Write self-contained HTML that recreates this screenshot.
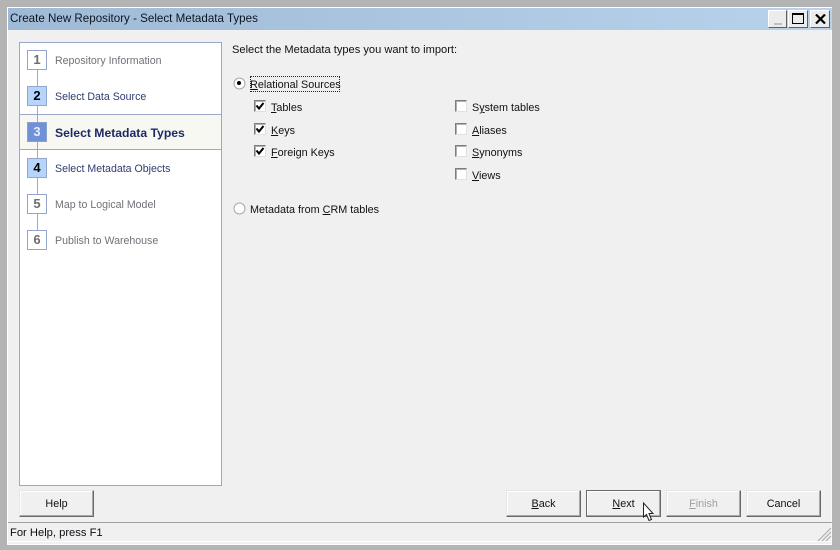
<!DOCTYPE html>
<html><head><meta charset="utf-8"><style>
html,body{margin:0;padding:0}
body{width:840px;height:550px;overflow:hidden;position:relative;background:#b4b4b4;font-family:"Liberation Sans",sans-serif;font-size:11px;color:#111}
div,span.a{position:absolute;box-sizing:border-box}
.t{white-space:nowrap;line-height:14px;height:14px}
u{text-decoration:underline;text-underline-offset:1px}
.n{width:20px;height:20px;left:27px;border:1px solid #93a5c8;background:#fff;color:#6d6d6d;font-weight:bold;font-size:13px;line-height:18px;text-align:center}
.n.b{background:#b5d5fd;color:#000}
.n.c{background:#7091d8;color:#e8eefb;border-color:#8aa0cf}
.s{left:55px;color:#6f7278;font-size:10.6px}
.s.d{color:#2f3c72}
.cb{width:12px;height:12px;background:#fff;border:1px solid;border-color:#7d7d7d #e0e0e0 #e0e0e0 #7d7d7d;box-shadow:inset 1px 1px 0 #b0b0b0}
.btn{height:27px;width:75px;top:490px;background:#f0f0f0;border:1px solid;border-color:#e6e6e6 #6a6a6a #6a6a6a #e6e6e6;box-shadow:inset -1px -1px 0 #a8a8a8,inset 1px 1px 0 #fff;text-align:center;line-height:27px;font-size:10.8px}
.wb{top:10px;height:18px;background:#ececec;border:1px solid;border-color:#fff #606060 #606060 #fff}
</style></head><body>
<div style="left:7px;top:7px;width:825px;height:538px;background:#f0f0f0;border-top:1px solid #fff;border-left:1px solid #fff;border-right:1px solid #fafafa;border-bottom:1px solid #fff"></div>
<div style="left:8px;top:8px;width:824px;height:22px;background:linear-gradient(90deg,#9fbad6,#b9d2ec)"></div>
<div class="t" style="left:10px;top:12px;font-size:11.6px;color:#0c1622">Create New Repository - Select Metadata Types</div>

<div class="wb" style="left:768px;width:19px"><div style="left:5px;top:12px;width:8px;height:2px;background:#c0c0c0"></div></div>
<div class="wb" style="left:788px;width:20px"><div style="left:3px;top:2px;width:12px;height:11px;border:1px solid #000;border-top-width:2px"></div></div>
<div class="wb" style="left:810px;width:20px"><svg style="position:absolute;left:4px;top:3px" width="11" height="10" viewBox="0 0 11 10"><path d="M1 .5L10 9.5M10 .5L1 9.5" stroke="#000" stroke-width="2.2" fill="none"/></svg></div>

<div style="left:19px;top:42px;width:203px;height:444px;background:#fff;border:1px solid #9aa8ca"></div>
<div style="left:20px;top:114px;width:201px;height:36px;background:#f8f8f3;border-top:1px solid #9aa8ca;border-bottom:1px solid #9aa8ca"></div>
<div style="left:37px;top:60px;width:1px;height:180px;background:#9aa8ca"></div>

<div class="n" style="top:50px">1</div><div class="t s" style="top:54px">Repository Information</div>
<div class="n b" style="top:86px">2</div><div class="t s d" style="top:90px">Select Data Source</div>
<div class="n c" style="top:122px">3</div><div class="t" style="left:55px;top:126px;font-weight:bold;color:#1e2a63;font-size:12.2px">Select Metadata Types</div>
<div class="n b" style="top:158px">4</div><div class="t s d" style="top:162px">Select Metadata Objects</div>
<div class="n" style="top:194px">5</div><div class="t s" style="top:198px">Map to Logical Model</div>
<div class="n" style="top:230px">6</div><div class="t s" style="top:234px">Publish to Warehouse</div>

<div class="t" style="left:232px;top:43px;font-size:11.1px">Select the Metadata types you want to import:</div>

<svg style="position:absolute;left:233px;top:77px" width="13" height="13"><circle cx="6.5" cy="6.5" r="5.5" fill="#fff" stroke="#a8a8a8"/><circle cx="6" cy="6" r="2" fill="#000"/></svg>
<div class="t" style="left:250px;top:78px;font-size:10.8px"><u>R</u>elational Sources</div>
<div style="left:250px;top:76px;width:90px;height:16px;border:1px dotted #222"></div>

<div class="cb" style="left:254px;top:100px"></div><svg style="position:absolute;left:254px;top:100px" width="12" height="12"><path d="M2.5 5.5L5 8.5L9.5 3" stroke="#000" stroke-width="2" fill="none"/></svg>
<div class="t" style="left:271px;top:101px;font-size:10.8px"><u>T</u>ables</div>
<div class="cb" style="left:254px;top:123px"></div><svg style="position:absolute;left:254px;top:123px" width="12" height="12"><path d="M2.5 5.5L5 8.5L9.5 3" stroke="#000" stroke-width="2" fill="none"/></svg>
<div class="t" style="left:271px;top:124px;font-size:10.8px"><u>K</u>eys</div>
<div class="cb" style="left:254px;top:145px"></div><svg style="position:absolute;left:254px;top:145px" width="12" height="12"><path d="M2.5 5.5L5 8.5L9.5 3" stroke="#000" stroke-width="2" fill="none"/></svg>
<div class="t" style="left:271px;top:146px;font-size:10.8px"><u>F</u>oreign Keys</div>

<div class="cb" style="left:455px;top:100px"></div><div class="t" style="left:472px;top:101px;font-size:10.8px">S<u>y</u>stem tables</div>
<div class="cb" style="left:455px;top:123px"></div><div class="t" style="left:472px;top:124px;font-size:10.8px"><u>A</u>liases</div>
<div class="cb" style="left:455px;top:145px"></div><div class="t" style="left:472px;top:146px;font-size:10.8px"><u>S</u>ynonyms</div>
<div class="cb" style="left:455px;top:168px"></div><div class="t" style="left:472px;top:169px;font-size:10.8px"><u>V</u>iews</div>

<svg style="position:absolute;left:233px;top:202px" width="13" height="13"><circle cx="6.5" cy="6.5" r="5.5" fill="#fff" stroke="#a8a8a8"/></svg>
<div class="t" style="left:250px;top:203px;font-size:10.8px">Metadata from <u>C</u>RM tables</div>

<div class="btn" style="left:19px">Help</div>
<div class="btn" style="left:506px"><u>B</u>ack</div>
<div class="btn" style="left:586px;border-color:#6a6a6a;box-shadow:inset -1px -1px 0 #a8a8a8,inset 1px 1px 0 #fff"><u>N</u>ext</div>
<div class="btn" style="left:666px;color:#a0a0a0"><u>F</u>inish</div>
<div class="btn" style="left:746px">Cancel</div>

<svg style="position:absolute;left:642px;top:502px" width="14" height="20"><path d="M1.5 1V15L4.5 12.5L7 18.5L9.5 17.5L7 11.5H11Z" fill="#fff" stroke="#222" stroke-width="1"/></svg>

<div style="left:8px;top:522px;width:824px;height:1px;background:#a0a0a0"></div>
<div style="left:8px;top:541px;width:824px;height:1px;background:#fff"></div>
<div class="t" style="left:10px;top:526px;font-size:11.2px;color:#0c0c14">For Help, press F1</div>
<svg style="position:absolute;left:816px;top:526px" width="16" height="16"><path d="M2 15L15 2M6 15L15 6M10 15L15 10" stroke="#b0b0b0" stroke-width="1.2" fill="none"/></svg>
</body></html>
